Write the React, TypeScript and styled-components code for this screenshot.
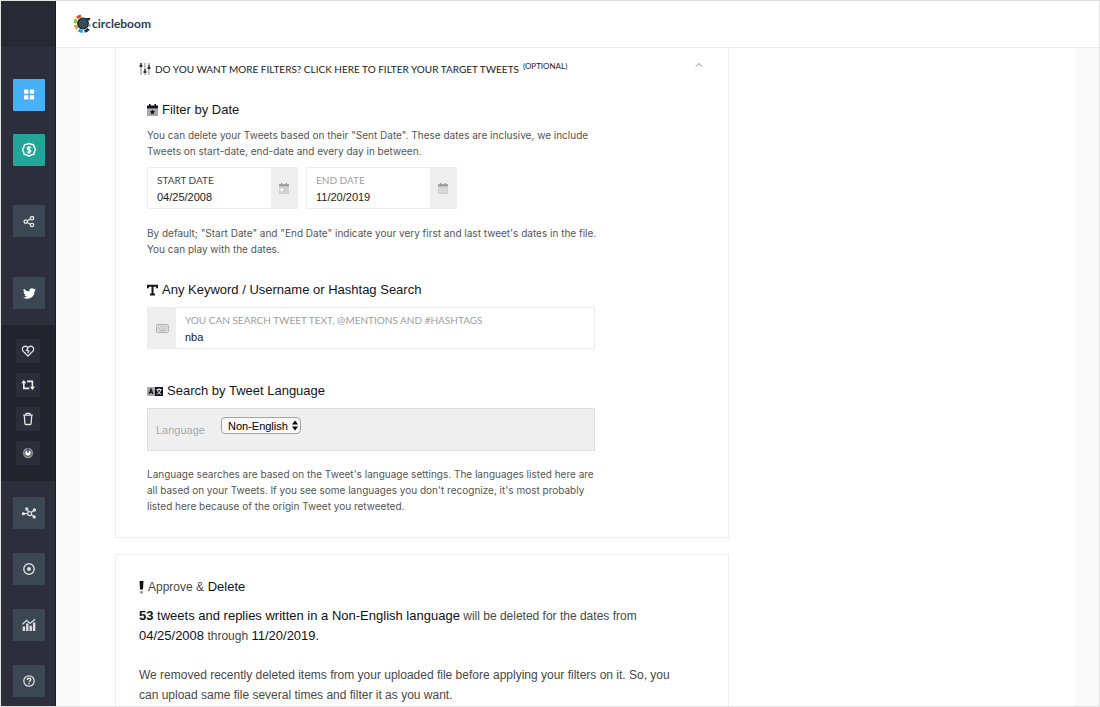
import React from 'react';
import styled, { createGlobalStyle, css } from 'styled-components';

const GlobalStyle = createGlobalStyle`
  *, *::before, *::after { box-sizing: border-box; }
  html, body, #root { height: 100%; }
  body {
    margin: 0;
    font-family: "Liberation Sans", Arial, Helvetica, sans-serif;
    color: #14151c;
    background: #fff;
  }
  h2, p { margin: 0; font-weight: 400; }
  button, input, select { font: inherit; color: inherit; }
`;

const Shell = styled.div`
  display: flex;
  height: 100vh;
  border: 1px solid #e2e2e2;
  background: #fafafa;
`;

const Sidebar = styled.nav`
  display: flex;
  flex-direction: column;
  flex: none;
  width: 55px;
  background: #2c2e3b;
  border-right: 1px solid #191b26;
`;

const SidebarTop = styled.div`
  height: 46px;
  flex: none;
  background: #262933;
`;

const NavGroup = styled.div<{ $gap: number; $top: number; $bottom?: number }>`
  display: flex;
  flex-direction: column;
  align-items: flex-start;
  gap: ${p => p.$gap}px;
  padding: ${p => p.$top}px 0 ${p => p.$bottom ?? 0}px 12px;
`;

const SubGroup = styled(NavGroup)`
  padding-left: 15px;
  background: #21242d;
`;

const NavButton = styled.button<{ $tone?: 'blue' | 'green' | 'slate' | 'dark' }>`
  display: flex;
  align-items: center;
  justify-content: center;
  width: 32px;
  height: 32px;
  padding: 0;
  border: 0;
  border-radius: 1px;
  color: #fff;
  cursor: pointer;
  background: ${p => ({ blue: '#48b0f7', green: '#22a699', slate: '#3b4752', dark: '#2b2d3a' })[p.$tone ?? 'slate']};
  ${p => p.$tone === 'dark' && css`width: 24px; height: 24px;`}
`;

const Body = styled.div`
  display: flex;
  flex-direction: column;
  flex: 1;
  min-width: 0;
`;

const Header = styled.header`
  display: flex;
  align-items: center;
  flex: none;
  height: 47px;
  padding-left: 17px;
  border-bottom: 1px solid #eee;
  background: #fff;
`;

const Brand = styled.a`
  display: flex;
  align-items: center;
  color: #2b3e50;
  font: 700 12px/16px Lato, sans-serif;
  text-decoration: none;
`;

const Scroller = styled.main`
  flex: 1;
  min-height: 0;
  overflow-y: auto;
  scrollbar-width: none;
  padding: 0 24px;
`;

const Sheet = styled.div`
  display: grid;
  grid-template-columns: 2fr 1fr;
  padding: 0 39px 40px 35px;
  background: #fff;
`;

const Column = styled.div`
  display: flex;
  flex-direction: column;
  gap: 16px;
`;

const Card = styled.section<{ $open?: boolean }>`
  border: 1px solid #eee;
  padding: 22px 23px;
  ${p => p.$open && css`border-top: 0; padding-top: 0; padding-bottom: 10px;`}
`;

const Disclosure = styled.button`
  display: flex;
  align-items: center;
  gap: 4px;
  width: 100%;
  height: 42px;
  padding: 0;
  border: 0;
  background: none;
  font: 400 10px/16px Lato, sans-serif;
  text-transform: uppercase;
  text-align: left;
  cursor: pointer;
  color: #1c1c1c;
`;

const Chevron = styled.svg`
  align-self: flex-start;
  margin: 14px 2px 0 auto;
  color: #888;
`;

const Optional = styled.small`
  font-size: 8px;
  line-height: 20px;
  align-self: flex-start;
  padding-top: 8px;
`;

const Section = styled.section`
  display: flex;
  flex-direction: column;
  max-width: 456px;
  padding: 10px 0 13px 8px;
`;

const Heading = styled.h2`
  display: flex;
  align-items: center;
  gap: 4px;
  margin-bottom: 7px;
  font-size: 13px;
  line-height: 20px;
`;

const Hint = styled.p`
  margin-right: -8px;
  font-family: Inter, "Liberation Sans", sans-serif;
  font-size: 10px;
  line-height: 16px;
  color: #555;
`;

const Fields = styled.div`
  display: flex;
  gap: 8px;
  margin: 8px 0 16px;
`;

const Field = styled.div<{ $wide?: boolean }>`
  display: flex;
  width: ${p => (p.$wide ? '100%' : '151px')};
  height: 42px;
  margin-bottom: ${p => (p.$wide ? '9px' : '0')};
  border: 1px solid #eee;
  background: #fff;
`;

const FieldText = styled.label<{ $muted?: boolean }>`
  display: flex;
  flex-direction: column;
  flex: 1;
  min-width: 0;
  padding: 5px 0 0 9px;
  font: 400 10px/14px Lato, sans-serif;
  text-transform: uppercase;
  color: ${p => (p.$muted ? '#a0a0a0' : '#444')};
`;

const FieldInput = styled.input`
  width: 100%;
  height: 20px;
  padding: 0;
  border: 0;
  outline: 0;
  background: none;
  font: 11px/20px "Liberation Sans", Arial, sans-serif;
  color: #222;
`;

const AddOn = styled.span<{ $wide?: boolean }>`
  display: flex;
  align-items: center;
  justify-content: center;
  width: ${p => (p.$wide ? '28px' : '26px')};
  flex: none;
  background: #eee;
  color: #aaa;
`;

const LanguageBox = styled.div`
  display: flex;
  align-items: flex-start;
  gap: 16px;
  height: 43px;
  margin-bottom: 15px;
  padding: 8px;
  border: 1px solid #dfdfdf;
  background: #efefef;
`;

const LanguageLabel = styled.label`
  padding-top: 4px;
  font-size: 11px;
  line-height: 18px;
  color: #aaa;
`;

const SelectWrap = styled.span`
  position: relative;
  display: flex;
  & > svg { position: absolute; right: 3px; top: 3px; pointer-events: none; }
`;

const Select = styled.select`
  appearance: none;
  width: 80px;
  height: 17px;
  padding: 0 0 0 6px;
  border: 1px solid #a5a5a5;
  border-radius: 4px;
  background: #f8f8f8;
  font-size: 11px;
  line-height: 14px;
  color: #000;
`;

const Summary = styled.p`
  max-width: 548px;
  margin-top: 19px;
  font-size: 12px;
  line-height: 20px;
  color: #484848;
  ${Heading} + & { margin-top: 9px; }
`;

const Ink = styled.span`
  font-size: 13px;
  color: #0f1018;
`;

const Light = styled.span`
  font-size: 12px;
  color: #484848;
`;

type IconProps = { size?: number; children: React.ReactNode; w?: number };
const Icon = ({ size = 16, w = 16, children }: IconProps) => (
  <svg width={(size * w) / 16} height={size} viewBox={`0 0 ${w} 16`} fill="none" stroke="currentColor" strokeWidth="1.5" aria-hidden="true">
    {children}
  </svg>
);

const GridIcon = () => (
  <Icon>
    <g fill="#fff" stroke="none">
      <rect x="3" y="2.500" width="4.400" height="4.200" rx=".6" /><rect x="8.800" y="2.500" width="4.400" height="4.200" rx=".6" />
      <rect x="3" y="8.300" width="4.400" height="4.200" rx=".6" /><rect x="8.800" y="8.300" width="4.400" height="4.200" rx=".6" />
    </g>
  </Icon>
);
const DollarIcon = () => (
  <Icon>
    <path strokeWidth="1.5" strokeLinejoin="round" d="M8 1.4 10 2.3 12.4 2.7 13.3 5.2 14.5 7.5 13.5 9.7 12.9 12.2 10.4 12.9 8 14.2 5.6 12.9 3.1 12.2 2.5 9.7 1.5 7.5 2.7 5.2 3.6 2.7 6 2.3Z" />
    <path strokeWidth="1.3" d="M10 5.9C9.6 5 6.3 4.7 6.2 6.4 6.2 8.3 9.8 7.2 9.8 9.2 9.7 10.9 6.4 10.7 6 9.6M8 4v8" />
  </Icon>
);
const ShareIcon = () => (
  <Icon>
    <g stroke="#e4e4e4" strokeWidth="1.3">
      <circle cx="4.8" cy="8.6" r="1.7" /><circle cx="11" cy="5.2" r="1.7" /><circle cx="11" cy="12" r="1.7" />
      <path d="m6.4 7.8 3-1.7M6.4 9.5l3 1.7" />
    </g>
  </Icon>
);
const TwitterIcon = () => (
  <svg width="13" height="13" viewBox="0 0 24 24" fill="#fff" aria-hidden="true">
    <path d="M23.9 4.6a10 10 0 0 1-2.8.8 5 5 0 0 0 2.2-2.7c-1 .6-2 1-3.1 1.2a4.9 4.9 0 0 0-8.4 4.5A14 14 0 0 1 1.7 3.2a4.9 4.9 0 0 0 1.5 6.5A5 5 0 0 1 1 9.1a4.9 4.9 0 0 0 3.9 4.9 5 5 0 0 1-2.2.1 4.9 4.9 0 0 0 4.6 3.4A10 10 0 0 1 0 19.5a14 14 0 0 0 21.5-12.4 10 10 0 0 0 2.4-2.5Z" />
  </svg>
);
const HeartIcon = () => (
  <Icon>
    <path stroke="#e4e4e4" strokeWidth="1.3" strokeLinejoin="round" d="M8 13 3.1 8.1C1.7 6.5 2.4 3.9 4.4 3.4 5.9 3 7.3 3.7 8 5c.7-1.3 2.1-2 3.6-1.6 2 .5 2.7 3.1 1.3 4.7ZM8 5 6.4 7.3l2.5.5L8 10" />
  </Icon>
);
const RetweetIcon = () => (
  <Icon>
    <path stroke="#eee" strokeWidth="1.6" d="M3.8 5.2v6.2h5.4M7 4.4h5.4v6" />
    <path fill="#eee" stroke="none" d="M1.2 6.2 3.8 3l2.6 3.2ZM9.8 9.7h5.2L12.4 13Z" />
  </Icon>
);
const TrashIcon = () => (
  <Icon>
    <path stroke="#e4e4e4" strokeWidth="1.3" strokeLinejoin="round" d="M3.2 4.2h9.6M4.3 4.4l.6 8.1c0 .7.5 1 1 1h4.2c.6 0 1-.3 1-1l.6-8.1M6 4V2.4h4V4" />
  </Icon>
);
const DialIcon = () => (
  <Icon>
    <circle cx="8" cy="8" r="4.3" stroke="#8e8e90" strokeWidth="1.7" />
    <circle cx="8" cy="8" r="2.8" fill="#fff" stroke="none" />
    <path d="M8 8V3.4" stroke="#2b2d3a" strokeWidth="1.2" /><path d="M5.6 3.8 8 8" stroke="#8e8e90" strokeWidth="1" />
  </Icon>
);
const NetworkIcon = () => (
  <Icon>
    <g stroke="#ddd" strokeWidth="1.2">
      <circle cx="8.6" cy="8.6" r="2" />
      <path d="M2.4 8.7h4.2M5.9 4.3l1.6 2.6M13 5.3l-2.8 2.2M10.2 9.8l2.6 1.7" />
      <g fill="#ddd"><circle cx="2.4" cy="8.7" r="1" /><circle cx="5.8" cy="4" r="1.1" /><circle cx="13.4" cy="5" r="1.1" /><circle cx="13.2" cy="11.9" r="1.1" /></g>
    </g>
  </Icon>
);
const TargetIcon = () => (
  <Icon>
    <circle cx="8" cy="8" r="5.2" stroke="#ddd" strokeWidth="1.4" /><circle cx="8" cy="8" r="2" fill="#ddd" stroke="none" />
  </Icon>
);
const ChartIcon = () => (
  <Icon>
    <path stroke="#ddd" strokeWidth="1.3" d="m1.5 7.3 4.1-4 3.3 3.2 5.2-4.3" />
    <path stroke="#ddd" strokeWidth="2.4" d="M2.9 14V9.5M6.3 14V6.5M9.7 14V8.7M13.1 14V5.5" />
  </Icon>
);
const HelpIcon = () => (
  <Icon>
    <circle cx="8" cy="8" r="5.2" stroke="#ddd" strokeWidth="1.3" />
    <path stroke="#eee" strokeWidth="1.3" d="M6.2 6.9c0-2.3 3.6-2.1 3.6-.2 0 1.2-1.7 1.2-1.8 2.5M8 10v1.3" />
  </Icon>
);
const SlidersIcon = () => (
  <svg width="12" height="14" viewBox="0 0 12 14" aria-hidden="true">
    <path stroke="#999" strokeWidth="1.2" d="M2 1v12M6 1v12M10 1v12" />
    <path stroke="#222" strokeWidth="1.2" d="M2 1v4M6 7v4M10 3v4" />
    <path stroke="#222" strokeWidth="1.6" d="M.4 4h3.2M4.4 10h3.2M8.4 6h3.2" />
  </svg>
);
const CalendarStarIcon = () => (
  <svg width="11" height="12" viewBox="0 0 11 12" aria-hidden="true">
    <path fill="#a8a8ab" d="M0 4.5h11V12H0z" />
    <path fill="#15161e" d="M0 1.6h2V0h1.6v1.6h3.8V0H9v1.6h2v2.8H0zM5.5 5.4l.8 1.7 1.9.2-1.4 1.3.4 1.8-1.7-.9-1.7.9.4-1.8-1.4-1.3 1.9-.2z" />
  </svg>
);
const CalendarIcon = ({ dense = false }: { dense?: boolean }) => (
  <svg width="10" height="11" viewBox="0 0 10 11" aria-hidden="true">
    <path fill="#cfcfcf" d="M0 4h10v7H0z" />
    <path fill="#999" d="M0 1.2h2V0h1.3v1.2h3.4V0H8v1.2h2v2.4H0z" />
    {dense
      ? <path stroke="#f4f4f4" strokeDasharray="1.4 1" d="M1 6h8M1 8.6h8" />
      : <path fill="#fff" d="M1.4 5.4h2.8v2.4H1.4z" />}
  </svg>
);
const TextIcon = () => (
  <svg width="11" height="12" viewBox="0 0 11 12" aria-hidden="true">
    <path stroke="#15161e" strokeWidth="2" fill="none" d="M.9 4.200V1.700h9.200v2.500M5.500 1.700v8.500M3 10.500h5" />
  </svg>
);
const KeyboardIcon = () => (
  <svg width="13" height="9" viewBox="0 0 13 9" fill="none" stroke="#b4b4b4" aria-hidden="true">
    <rect x=".5" y=".5" width="12" height="8" rx="1" fill="#ddd" />
    <path strokeDasharray="1 1" d="M2 2.8h9M3 4.6h8" /><path d="M3.5 6.5h6" />
  </svg>
);
const LanguageIcon = () => (
  <svg width="16" height="9" viewBox="0 0 16 9" fill="none" aria-hidden="true">
    <path fill="#aaa" d="M0 0h8v9H0z" /><path fill="#15161e" d="M8 0h8v9H8z" />
    <path stroke="#15161e" strokeWidth="1.2" d="M2 7 4 2l2 5M2.8 5.3h2.4" />
    <path stroke="#fff" d="M9.5 2.6h5M12 1.3v1.3M13.7 2.8c-.4 2-1.6 3.4-3.6 4.4M10.5 3.2c.6 2 1.9 3.3 3.7 4" />
  </svg>
);
const AlertIcon = () => (
  <svg width="5" height="13" viewBox="0 0 5 13" aria-hidden="true">
    <path fill="#0f1018" d="M.5 0h4L4 8.5H1z" /><circle cx="2.5" cy="11.2" r="1.5" fill="#999" />
  </svg>
);
const LogoMark = () => (
  <svg width="19" height="20" viewBox="0 0 19 20" aria-hidden="true">
    <g fill="none" strokeWidth="3">
      <path stroke="#e8492c" d="M4 3.8A8 8 0 0 1 8 2" />
      <path stroke="#8cc63f" d="M2.2 9.2A8 8 0 0 1 3.2 5" />
      <path stroke="#f39a3a" d="M4.4 14.8A8 8 0 0 1 2.3 11" />
      <path stroke="#2a9fe0" d="M9.8 17.5A8 8 0 0 1 5.6 16" />
      <path stroke="#22313f" d="M15.6 15A8 8 0 0 1 11.5 17.4" />
    </g>
    <circle cx="10" cy="9.5" r="5.3" fill="#3a4a5b" stroke="#17232f" strokeWidth="1.3" />
    <path fill="#17232f" d="M12.5 4h5l-1.5 3z" />
    <path fill="#2a9fe0" d="M15.8 10.5h2l-.7 2.3-1.9-.5z" />
  </svg>
);

export default function App() {
  return (
    <>
      <GlobalStyle />
      <Shell>
        <Sidebar aria-label="Main">
          <SidebarTop />
          <NavGroup $gap={23} $top={32}>
            <NavButton $tone="blue" aria-label="Dashboard"><GridIcon /></NavButton>
            <NavButton $tone="green" aria-label="Pricing"><DollarIcon /></NavButton>
          </NavGroup>
          <NavGroup $gap={40} $top={39} $bottom={16}>
            <NavButton aria-label="Share"><ShareIcon /></NavButton>
            <NavButton aria-label="Twitter"><TwitterIcon /></NavButton>
          </NavGroup>
          <SubGroup $gap={10} $top={14} $bottom={16}>
            <NavButton $tone="dark" aria-label="Unlike"><HeartIcon /></NavButton>
            <NavButton $tone="dark" aria-label="Retweets"><RetweetIcon /></NavButton>
            <NavButton $tone="dark" aria-label="Delete tweets"><TrashIcon /></NavButton>
            <NavButton $tone="dark" aria-label="Activity"><DialIcon /></NavButton>
          </SubGroup>
          <NavGroup $gap={24} $top={16}>
            <NavButton aria-label="Network"><NetworkIcon /></NavButton>
            <NavButton aria-label="Target"><TargetIcon /></NavButton>
            <NavButton aria-label="Analytics"><ChartIcon /></NavButton>
            <NavButton aria-label="Help"><HelpIcon /></NavButton>
          </NavGroup>
        </Sidebar>
        <Body>
          <Header>
            <Brand href="#"><LogoMark />circleboom</Brand>
          </Header>
          <Scroller>
            <Sheet>
              <Column>
                <Card $open>
                  <Disclosure type="button" aria-expanded="true">
                    <SlidersIcon />
                    Do you want more filters? Click here to filter your target tweets
                    <Optional>(Optional)</Optional>
                    <Chevron width="8" height="6" viewBox="0 0 8 6" fill="none" stroke="currentColor" aria-hidden="true"><path d="m1 4.5 3-3 3 3" /></Chevron>
                  </Disclosure>
                  <Section>
                    <Heading><CalendarStarIcon />Filter by Date</Heading>
                    <Hint>You can delete your Tweets based on their "Sent Date". These dates are inclusive, we include Tweets on start-date, end-date and every day in between.</Hint>
                    <Fields>
                      <Field>
                        <FieldText>Start Date<FieldInput defaultValue="04/25/2008" /></FieldText>
                        <AddOn><CalendarIcon /></AddOn>
                      </Field>
                      <Field>
                        <FieldText $muted>End Date<FieldInput defaultValue="11/20/2019" /></FieldText>
                        <AddOn><CalendarIcon dense /></AddOn>
                      </Field>
                    </Fields>
                    <Hint>By default; "Start Date" and "End Date" indicate your very first and last tweet's dates in the file. You can play with the dates.</Hint>
                  </Section>
                  <Section>
                    <Heading><TextIcon />Any Keyword / Username or Hashtag Search</Heading>
                    <Field $wide>
                      <AddOn $wide><KeyboardIcon /></AddOn>
                      <FieldText $muted>You can search tweet text, @mentions and #hashtags<FieldInput defaultValue="nba" /></FieldText>
                    </Field>
                  </Section>
                  <Section>
                    <Heading><LanguageIcon />Search by Tweet Language</Heading>
                    <LanguageBox>
                      <LanguageLabel htmlFor="language">Language</LanguageLabel>
                      <SelectWrap>
                        <Select id="language" defaultValue="Non-English">
                          <option>Non-English</option>
                          <option>English</option>
                        </Select>
                        <svg width="6" height="11" viewBox="0 0 6 11" aria-hidden="true"><path d="M0 4.5 3 .5l3 4zM0 6.5h6l-3 4z" /></svg>
                      </SelectWrap>
                    </LanguageBox>
                    <Hint>Language searches are based on the Tweet's language settings. The languages listed here are all based on your Tweets. If you see some languages you don't recognize, it's most probably listed here because of the origin Tweet you retweeted.</Hint>
                  </Section>
                </Card>
                <Card>
                  <Heading><AlertIcon /><span><Light>Approve &amp;</Light> Delete</span></Heading>
                  <Summary>
                    <Ink><b>53</b> tweets and replies written in a Non-English language</Ink> will be deleted for the dates from <Ink>04/25/2008</Ink> through <Ink>11/20/2019.</Ink>
                  </Summary>
                  <Summary>We removed recently deleted items from your uploaded file before applying your filters on it. So, you can upload same file several times and filter it as you want.</Summary>
                </Card>
              </Column>
            </Sheet>
          </Scroller>
        </Body>
      </Shell>
    </>
  );
}
